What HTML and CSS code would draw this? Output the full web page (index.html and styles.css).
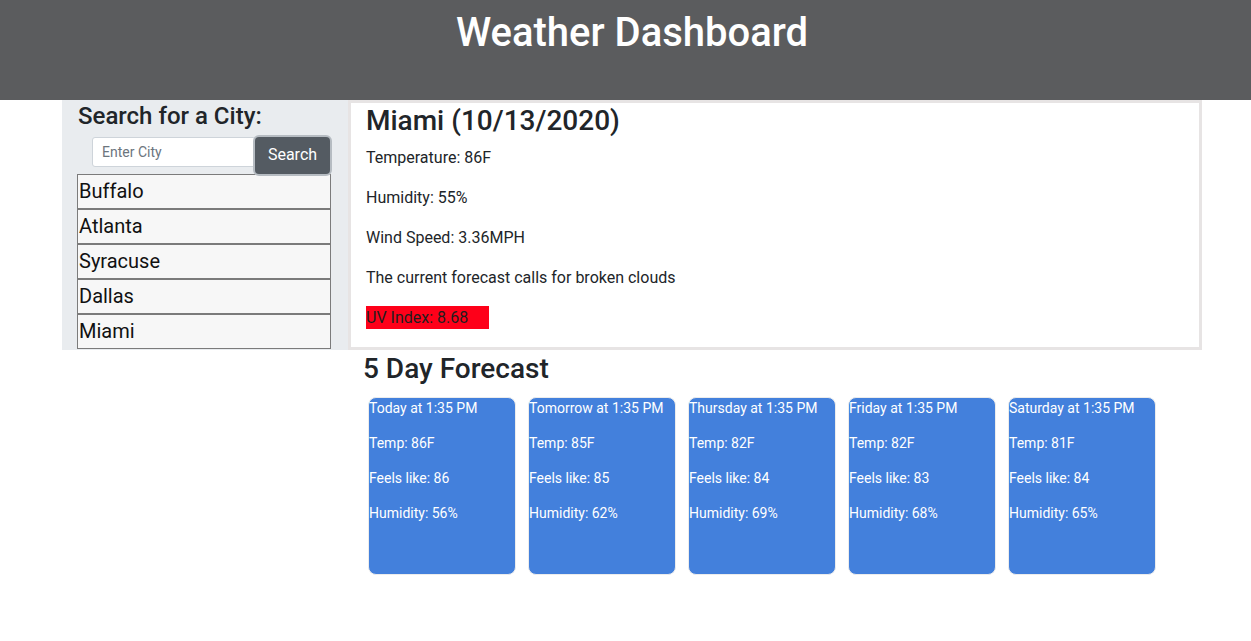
FILE: index.html
```html
<!DOCTYPE html>
<html lang="en">
<head>
<meta charset="utf-8">
<title>Weather Dashboard</title>
<link rel="stylesheet" href="styles.css">
</head>
<body>
<header class="top">
  <div class="top-inner">
    <h1 class="title">Weather Dashboard</h1>
  </div>
</header>
<div class="layout">
  <aside class="sidebar">
    <h4 class="side-title">Search for a City:</h4>
    <form class="search">
      <input class="search-input" type="text" placeholder="Enter City">
      <button class="search-btn" type="button">Search</button>
    </form>
    <ul class="cities">
      <li class="city">Buffalo</li>
      <li class="city">Atlanta</li>
      <li class="city">Syracuse</li>
      <li class="city">Dallas</li>
      <li class="city">Miami</li>
    </ul>
  </aside>
  <div class="content">
    <section class="current">
      <h3 class="current-title">Miami (10/13/2020)</h3>
      <p class="stat">Temperature: 86F</p>
      <p class="stat">Humidity: 55%</p>
      <p class="stat">Wind Speed: 3.36MPH</p>
      <p class="stat">The current forecast calls for broken clouds</p>
      <p class="stat uv">UV Index: 8.68</p>
    </section>
    <section class="forecast">
      <h3 class="forecast-title">5 Day Forecast</h3>
      <div class="cards">
        <div class="card">
          <p>Today at 1:35 PM</p>
          <p>Temp: 86F</p>
          <p>Feels like: 86</p>
          <p>Humidity: 56%</p>
        </div>
        <div class="card">
          <p>Tomorrow at 1:35 PM</p>
          <p>Temp: 85F</p>
          <p>Feels like: 85</p>
          <p>Humidity: 62%</p>
        </div>
        <div class="card">
          <p>Thursday at 1:35 PM</p>
          <p>Temp: 82F</p>
          <p>Feels like: 84</p>
          <p>Humidity: 69%</p>
        </div>
        <div class="card">
          <p>Friday at 1:35 PM</p>
          <p>Temp: 82F</p>
          <p>Feels like: 83</p>
          <p>Humidity: 68%</p>
        </div>
        <div class="card">
          <p>Saturday at 1:35 PM</p>
          <p>Temp: 81F</p>
          <p>Feels like: 84</p>
          <p>Humidity: 65%</p>
        </div>
      </div>
    </section>
  </div>
</div>
</body>
</html>
```
FILE: styles.css
```css
* { box-sizing: border-box; }
body {
  margin: 0;
  font-family: Roboto, Inter, "Liberation Sans", sans-serif;
  color: #212529;
  background: #fff;
  font-size: 16px;
  line-height: 1.5;
}
.top {
  background: #5b5c5e;
  height: 100px;
  padding-top: 9px;
}
.top-inner {
  width: 1140px;
  margin-left: 62px;
  text-align: center;
}
.title {
  margin: 0;
  color: #fff;
  font-size: 40px;
  font-weight: 500;
  line-height: 1.2;
}
.layout {
  display: flex;
  align-items: flex-start;
  margin-left: 62px;
  width: 1140px;
}
.sidebar {
  width: 286px;
  flex: none;
  height: 250px;
  background: #e9ecef;
  padding: 0 17px 0 15px;
}
.side-title {
  margin: 0 0 6px 1px;
  padding-top: 2px;
  font-size: 24px;
  font-weight: 500;
  line-height: 1.2;
}
.search {
  display: flex;
  align-items: flex-start;
  margin: 0 0 0 15px;
}
.search-input {
  width: 164px;
  height: 30px;
  border: 1px solid #ced4da;
  border-radius: 3px;
  padding: 0 9px;
  font: inherit;
  font-size: 14px;
  color: #495057;
  background: #fff;
  margin-right: -3px;
}
.search-input::placeholder { color: #6c757d; }
.search-btn {
  position: relative;
  width: 75px;
  height: 37px;
  border: 0;
  border-radius: 4px;
  background: #545b62;
  color: #fff;
  font: inherit;
  font-size: 16px;
  box-shadow: 0 0 0 2px #b6bcc2;
  margin-left: 2px;
}
.cities {
  list-style: none;
  margin: 0;
  padding: 0;
  width: 254px;
}
.city {
  height: 35px;
  border: 1px solid #7b7b7b;
  background: #f7f7f7;
  font-size: 20px;
  line-height: 33px;
  padding-left: 1px;
  color: #111;
}
.content {
  width: 854px;
  flex: none;
}
.current {
  height: 250px;
  border: 3px solid #e7e4e4;
  padding: 0 15px;
}
.current-title {
  margin: 0 0 8px;
  padding-top: 1px;
  font-size: 28px;
  font-weight: 500;
  line-height: 1.2;
}
.stat {
  margin: 0 0 16px;
}
.uv {
  width: 123px;
  height: 23px;
  line-height: 23px;
  background: #fe0019;
  color: #1e1e1e;
}
.forecast {
  padding-left: 15px;
}
.forecast-title {
  margin: 0 0 11px;
  padding-top: 2px;
  font-size: 28px;
  font-weight: 500;
  line-height: 1.2;
}
.cards {
  display: flex;
  gap: 12px;
  padding-left: 5px;
}
.card {
  width: 148px;
  height: 178px;
  background: #4380dc;
  border: 1px solid #ececec;
  border-radius: 8px;
  color: #fff;
  font-size: 14px;
  line-height: 21px;
}
.card p {
  margin: 0 0 14px;
}
```
